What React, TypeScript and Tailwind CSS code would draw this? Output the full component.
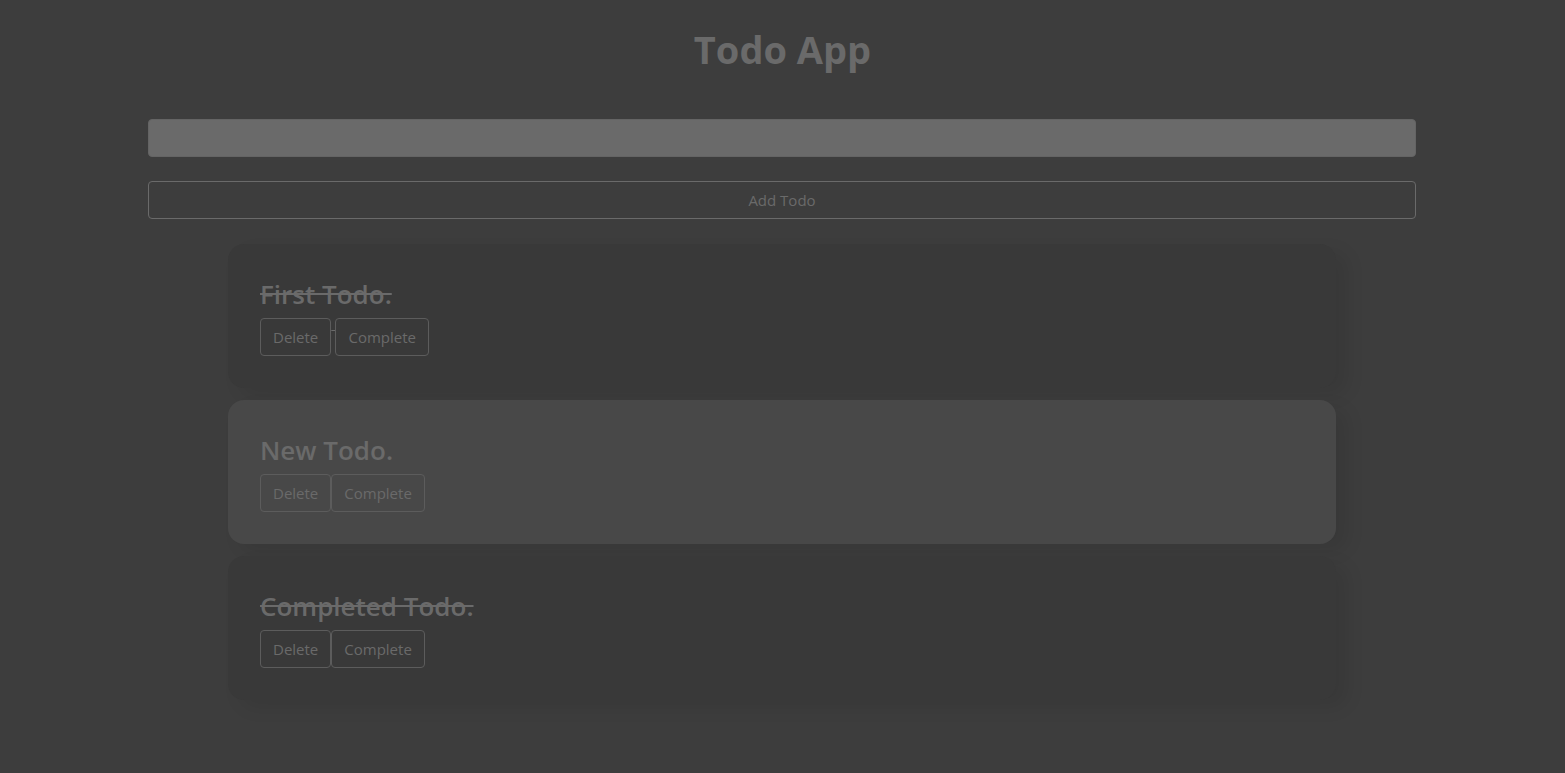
const todos = [
  { title: "First Todo.", done: true, spaced: true, bg: "bg-[#393939]" },
  { title: "New Todo.", done: false, spaced: false, bg: "bg-[#484848]" },
  { title: "Completed Todo.", done: true, spaced: false, bg: "bg-[#393939]" },
];

function TodoCard({ title, done, spaced, bg }: (typeof todos)[number]) {
  const btn =
    "inline-block h-[38px] px-3 rounded-[4px] border border-[#5c5c5c] bg-transparent text-[15px] text-[#6a6a6a] align-top";
  return (
    <div
      className={`${bg} rounded-[16px] px-8 pt-8 pb-8 shadow-[12px_8px_18px_rgba(0,0,0,0.08)] ${
        done ? "line-through decoration-[#6a6a6a]" : ""
      }`}
    >
      <h3 className="text-[26px] leading-[37px] font-semibold text-[#6a6a6a] m-0">{title}</h3>
      <div className="mt-[5px] whitespace-nowrap">
        <button className={btn}>Delete</button>
        {spaced ? " " : null}
        <button className={btn}>Complete</button>
      </div>
    </div>
  );
}

export default function App() {
  return (
    <div className="min-h-screen bg-[#3d3d3d] font-['Open_Sans','Liberation_Sans',sans-serif] text-[#6a6a6a]">
      <h1 className="text-center text-[38px] font-bold leading-[48px] pt-[25px] text-[#6a6a6a]">Todo App</h1>
      <div className="pl-[148px] pr-[149px] pt-[46px]">
        <input className="block w-full h-[38px] rounded-[4px] bg-[#6a6a6a] border border-[#646464] outline-none" />
        <button className="mt-[24px] block w-full h-[38px] rounded-[4px] border border-[#6a6a6a] text-[15px] text-[#6a6a6a]">
          Add Todo
        </button>
      </div>
      <div className="mx-[228px] w-[1108px] mt-[25px] flex flex-col gap-[12px] pb-[60px]">
        {todos.map((t) => (
          <TodoCard key={t.title} {...t} />
        ))}
      </div>
    </div>
  );
}
